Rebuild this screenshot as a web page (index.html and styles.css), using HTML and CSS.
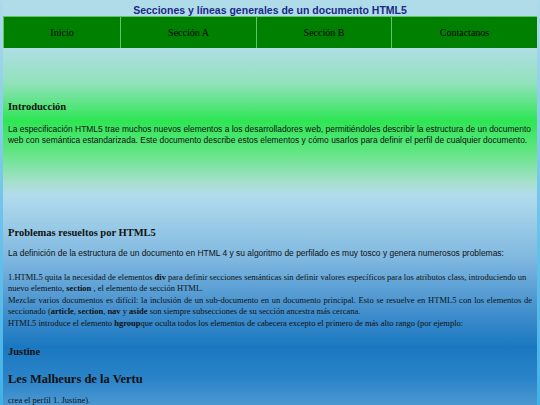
FILE: index.html
```html
<!DOCTYPE html>
<html lang="es">
<head>
<meta charset="utf-8">
<title>Secciones y líneas generales de un documento HTML5</title>
<link rel="stylesheet" href="styles.css">
</head>
<body>
<div class="wrap">
  <header class="top">
    <h1 class="title">Secciones y líneas generales de un documento HTML5</h1>
    <nav class="menu">
      <a class="cell c1" href="#">Inicio</a>
      <a class="cell c2" href="#">Sección A</a>
      <a class="cell c3" href="#">Sección B</a>
      <a class="cell c4" href="#">Contactanos</a>
    </nav>
  </header>
  <section class="intro">
    <h3 class="head">Introducción</h3>
    <p class="sans">La especificación HTML5 trae muchos nuevos elementos a los desarrolladores web, permitiéndoles describir la estructura de un documento web con semántica estandarizada. Este documento describe estos elementos y cómo usarlos para definir el perfil de cualquier documento.</p>
  </section>
  <section class="problems">
    <h3 class="head">Problemas resueltos por HTML5</h3>
    <p class="sans lead">La definición de la estructura de un documento en HTML 4 y su algoritmo de perfilado es muy tosco y genera numerosos problemas:</p>
    <p class="serif first">1.HTML5 quita la necesidad de elementos <b>div</b> para definir secciones semánticas sin definir valores específicos para los atributos class, introduciendo un nuevo elemento, <b>section</b> , el elemento de sección HTML.</p>
    <p class="serif justified">Mezclar varios documentos es difícil: la inclusión de un sub-documento en un documento principal. Esto se resuelve en HTML5 con los elementos de seccionado (<b>article</b>, <b>section</b>, <b>nav</b> y <b>aside</b> son siempre subsecciones de su sección ancestra más cercana.</p>
    <p class="serif">HTML5 introduce el elemento <b>hgroup</b>que oculta todos los elementos de cabecera excepto el primero de más alto rango (por ejemplo:</p>
    <h3 class="head justine">Justine</h3>
    <h2 class="big">Les Malheurs de la Vertu</h2>
    <p class="serif last">crea el perfil 1. Justine).</p>
  </section>
</div>
</body>
</html>
```
FILE: styles.css
```css
html, body {
  margin: 0;
  padding: 0;
}
body {
  background: linear-gradient(#aedaea 0%, #7cc8ec 40%, #3fb2e6 100%);
  font-family: "Liberation Serif", "Times New Roman", serif;
  font-size: 8.5px;
  color: #111;
  height: 405px;
  overflow: hidden;
}
.wrap {
  margin: 0 3px;
}
.top {
  background: #b0dcea;
}
.title {
  margin: 0;
  height: 16px;
  line-height: 20px;
  text-align: center;
  font-family: "Liberation Sans", Arial, sans-serif;
  font-weight: bold;
  font-size: 10.5px;
  color: #1a2a86;
}
.menu {
  display: flex;
  gap: 1px;
  padding: 1px 0 0 1px;
  background: #66c266;
  height: 31px;
}
.cell {
  display: flex;
  align-items: center;
  justify-content: center;
  background: #008000;
  color: #000;
  text-decoration: none;
  font-size: 10px;
}
.c1 { width: 116px; }
.c2 { width: 135px; }
.c3 { width: 134px; }
.c4 { flex: 1; }
.intro {
  height: 146px;
  box-sizing: border-box;
  padding: 52px 5px 0;
  background: linear-gradient(#b0dee6 0%, #8fe2b8 25%, #2ee654 50%, #5ee680 70%, #a6e0cc 92%, #b0dce8 100%);
}
.head {
  margin: 0;
  font-size: 10.5px;
  line-height: 13px;
  font-weight: bold;
  color: #111;
}
.sans {
  font-family: "Liberation Sans", Arial, sans-serif;
  font-size: 8.45px;
  line-height: 11px;
  margin: 10.5px 0 0;
  color: #111;
}
.problems {
  height: 320px;
  box-sizing: border-box;
  padding: 31.5px 5px 0;
  background: linear-gradient(#b2dcec 0%, #80b8e0 20%, #3d8ccc 38%, #1a78c0 48%, #2c84c8 58%, #5aa2d6 70%, #9ccbe8 100%);
}
.lead {
  margin-top: 9px;
}
.serif {
  margin: 0;
  line-height: 11.5px;
}
.justified {
  text-align: justify;
}
.first {
  margin-top: 13px;
}
.justine {
  margin-top: 15.5px;
}
.big {
  margin: 14px 0 0;
  font-size: 12.5px;
  line-height: 15px;
  font-weight: bold;
}
.last {
  margin-top: 8px;
}
```
